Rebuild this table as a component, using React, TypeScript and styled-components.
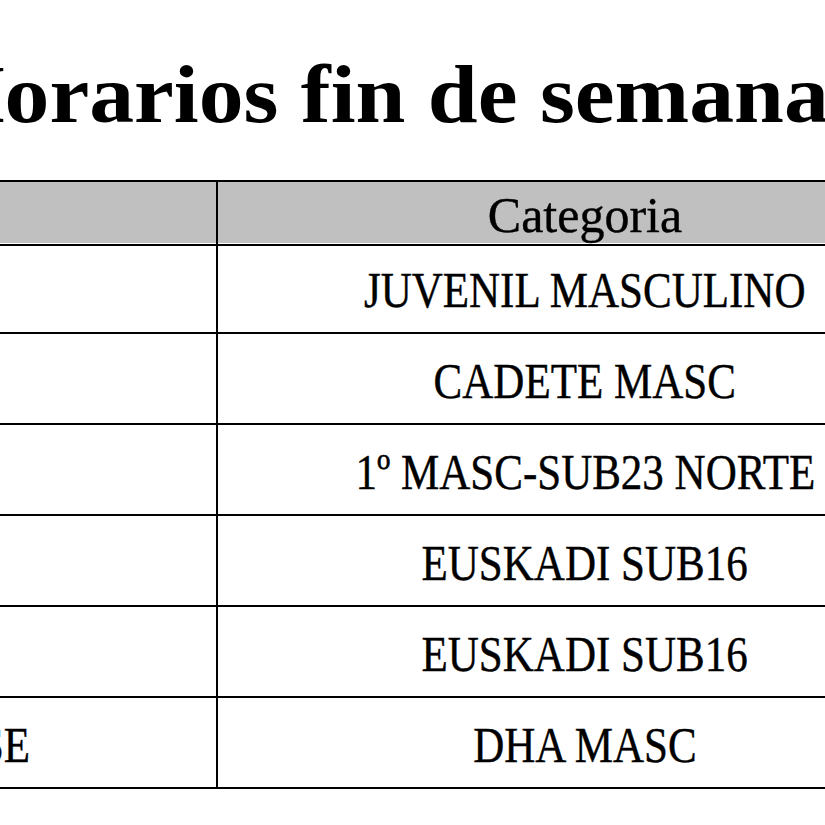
import React from "react";
import styled, { createGlobalStyle } from "styled-components";

interface Row {
  place: string;
  category: string;
}

const rows: Row[] = [
  { place: "", category: "JUVENIL MASCULINO" },
  { place: "", category: "CADETE MASC" },
  { place: "", category: "1º MASC-SUB23 NORTE" },
  { place: "", category: "EUSKADI SUB16" },
  { place: "", category: "EUSKADI SUB16" },
  { place: "MUNGIA BASE", category: "DHA MASC" },
];

const GlobalStyle = createGlobalStyle`
  html, body {
    margin: 0;
    padding: 0;
    overflow: hidden;
    background: #ffffff;
  }
  body {
    font-family: "Liberation Serif", "Times New Roman", serif;
    color: #000000;
  }
`;

const Sheet = styled.div`
  width: 1402px;
  margin-left: -450px;
`;

const Title = styled.h1`
  margin: 0;
  padding: 52px 0 0 262px;
  height: 180px;
  box-sizing: border-box;
  font-size: 83px;
  line-height: 84px;
  font-weight: 700;
  text-align: center;
  white-space: nowrap;
`;

const TitleText = styled.span`
  display: inline-block;
  transform: scaleX(1.08);
`;

const Table = styled.div`
  border-top: 2px solid #000;
`;

const TableRow = styled.div<{ $header?: boolean }>`
  display: grid;
  grid-template-columns: 668px 734px;
  height: ${(p) => (p.$header ? 61 : 91)}px;
  background: ${(p) => (p.$header ? "#c0c0c0" : "#ffffff")};
`;

const Cell = styled.div<{ $divider?: boolean }>`
  box-sizing: border-box;
  display: flex;
  align-items: center;
  justify-content: center;
  padding-top: 4px;
  border-bottom: 2px solid #000;
  border-right: ${(p) => (p.$divider ? "2px solid #000" : "none")};
  font-size: 50px;
  white-space: nowrap;
  -webkit-text-stroke: 0.4px #000;
`;

const Caps = styled.span`
  display: inline-block;
  transform: scaleX(0.86);
`;

export default function App() {
  return (
    <>
      <GlobalStyle />
      <Sheet>
        <Title>
          <TitleText>Horarios fin de semana</TitleText>
        </Title>
        <Table>
          <TableRow $header>
            <Cell $divider />
            <Cell>Categoria</Cell>
          </TableRow>
          {rows.map((r, i) => (
            <TableRow key={i}>
              <Cell $divider>
                <Caps>{r.place}</Caps>
              </Cell>
              <Cell>
                <Caps>{r.category}</Caps>
              </Cell>
            </TableRow>
          ))}
        </Table>
      </Sheet>
    </>
  );
}
